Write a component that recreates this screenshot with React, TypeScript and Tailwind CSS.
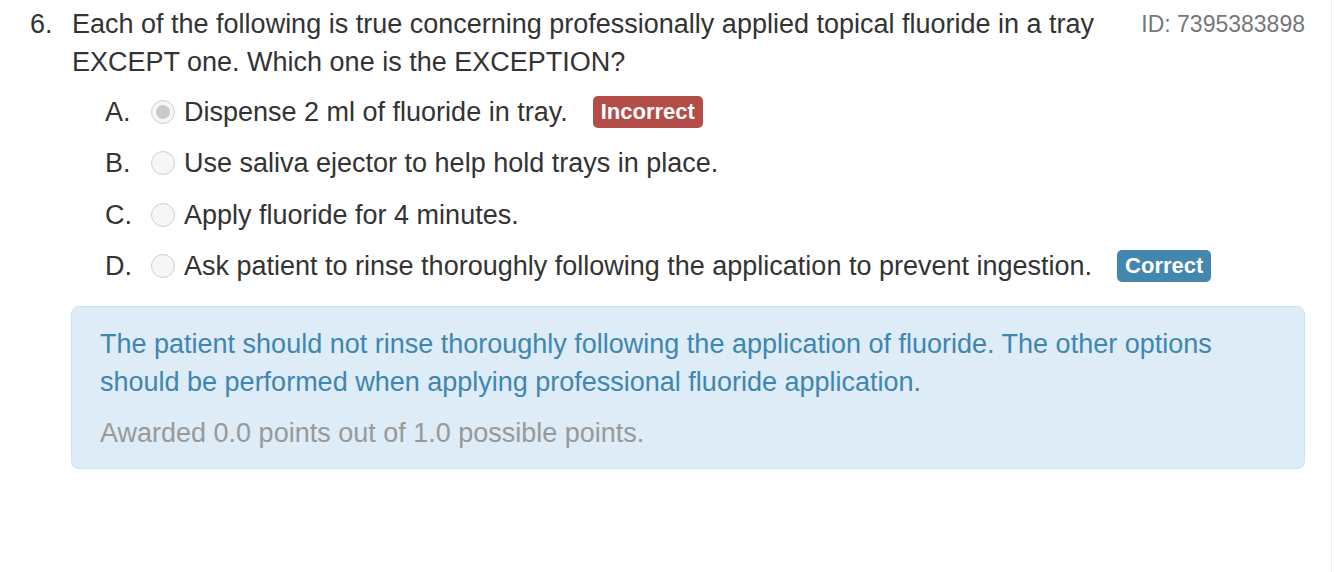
import React from "react";

type Option = {
  letter: string;
  text: string;
  checked?: boolean;
  badge?: "Incorrect" | "Correct";
};

const OPTIONS: Option[] = [
  { letter: "A.", text: "Dispense 2 ml of fluoride in tray.", checked: true, badge: "Incorrect" },
  { letter: "B.", text: "Use saliva ejector to help hold trays in place." },
  { letter: "C.", text: "Apply fluoride for 4 minutes." },
  { letter: "D.", text: "Ask patient to rinse thoroughly following the application to prevent ingestion.", badge: "Correct" },
];

function Radio({ checked }: { checked?: boolean }) {
  return (
    <span className="flex h-[24px] w-[24px] flex-shrink-0 items-center justify-center rounded-full border border-[#cfcfcf] bg-[#f6f6f6]">
      {checked && <span className="h-[14px] w-[14px] rounded-full bg-[#c9c9c9]" />}
    </span>
  );
}

function Badge({ kind }: { kind: "Incorrect" | "Correct" }) {
  return (
    <span
      className={`ml-[25px] inline-flex h-[32px] items-center rounded-[5px] px-[8px] text-[22px] font-bold leading-none text-white ${
        kind === "Incorrect" ? "bg-[#b24d48]" : "bg-[#4386ae]"
      }`}
    >
      {kind}
    </span>
  );
}

export default function App() {
  return (
    <div
      className="relative h-[572px] w-[1334px] bg-white text-[27px] leading-[38px] text-[#333]"
      style={{ fontFamily: '"Liberation Sans", Arial, sans-serif' }}
    >
      <div className="pl-[30px] pr-[29px] pt-[5px]">
        {/* Question */}
        <div className="flex">
          <span className="w-[42px] flex-shrink-0">6.</span>
          <p className="flex-1 pr-[20px]">
            Each of the following is true concerning professionally applied topical fluoride in a tray EXCEPT one. Which one is the EXCEPTION?
          </p>
          <span className="flex-shrink-0 text-[23px] text-[#777]">ID: 7395383898</span>
        </div>

        {/* Options */}
        <div className="mt-[5px] pl-[75px]">
          {OPTIONS.map((opt) => (
            <div key={opt.letter} className="flex h-[51.5px] items-center">
              <span className="w-[46px] flex-shrink-0">{opt.letter}</span>
              <Radio checked={opt.checked} />
              <span className="ml-[9px]">{opt.text}</span>
              {opt.badge && <Badge kind={opt.badge} />}
            </div>
          ))}
        </div>

        {/* Explanation */}
        <div className="ml-[41px] mt-[14px] rounded-[8px] border border-[#c5e6f1] bg-[#ddecf7] px-[28px] pb-[16px] pt-[18px]">
          <p className="text-[#3f86b0]">
            The patient should not rinse thoroughly following the application of fluoride. The other options should be performed when applying professional fluoride application.
          </p>
          <p className="mt-[13px] text-[#999]">Awarded 0.0 points out of 1.0 possible points.</p>
        </div>
      </div>
      <div className="absolute right-[2px] top-0 h-full w-px bg-[#eee]" />
    </div>
  );
}
